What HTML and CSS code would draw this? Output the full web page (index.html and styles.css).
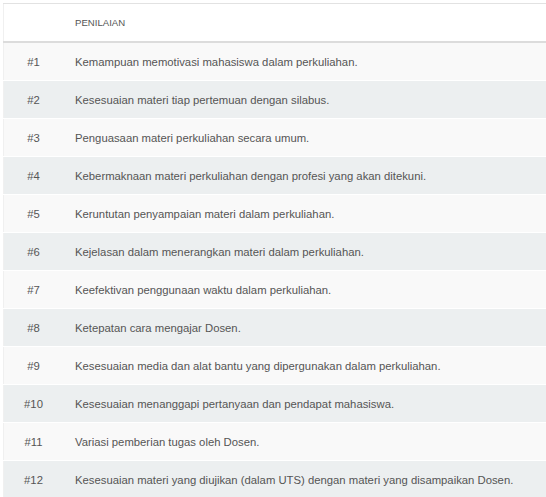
FILE: index.html
```html
<!DOCTYPE html>
<html>
<head>
<meta charset="utf-8">
<link rel="stylesheet" href="styles.css">
</head>
<body>
<table class="grid">
  <thead>
    <tr><th class="num"></th><th class="desc">PENILAIAN</th></tr>
  </thead>
  <tbody>
    <tr><td class="num">#1</td><td class="desc">Kemampuan memotivasi mahasiswa dalam perkuliahan.</td></tr>
    <tr><td class="num">#2</td><td class="desc">Kesesuaian materi tiap pertemuan dengan silabus.</td></tr>
    <tr><td class="num">#3</td><td class="desc">Penguasaan materi perkuliahan secara umum.</td></tr>
    <tr><td class="num">#4</td><td class="desc">Kebermaknaan materi perkuliahan dengan profesi yang akan ditekuni.</td></tr>
    <tr><td class="num">#5</td><td class="desc">Keruntutan penyampaian materi dalam perkuliahan.</td></tr>
    <tr><td class="num">#6</td><td class="desc">Kejelasan dalam menerangkan materi dalam perkuliahan.</td></tr>
    <tr><td class="num">#7</td><td class="desc">Keefektivan penggunaan waktu dalam perkuliahan.</td></tr>
    <tr><td class="num">#8</td><td class="desc">Ketepatan cara mengajar Dosen.</td></tr>
    <tr><td class="num">#9</td><td class="desc">Kesesuaian media dan alat bantu yang dipergunakan dalam perkuliahan.</td></tr>
    <tr><td class="num">#10</td><td class="desc">Kesesuaian menanggapi pertanyaan dan pendapat mahasiswa.</td></tr>
    <tr><td class="num">#11</td><td class="desc">Variasi pemberian tugas oleh Dosen.</td></tr>
    <tr><td class="num">#12</td><td class="desc">Kesesuaian materi yang diujikan (dalam UTS) dengan materi yang disampaikan Dosen.</td></tr>
  </tbody>
</table>
</body>
</html>
```

FILE: styles.css
```css
html, body {
  margin: 0;
  padding: 0;
  background: #fff;
}
body {
  padding: 3px 0 0 3px;
  font-family: "Liberation Sans", Arial, sans-serif;
  color: #555;
  overflow: hidden;
}
.grid {
  border-collapse: collapse;
  width: 543px;
  border-top: 1px solid #e2e2e2;
  border-left: 1px solid #f0f0f0;
}
.grid th {
  height: 37px;
  padding: 0;
  font-weight: normal;
  font-size: 9.6px;
  color: #555;
  text-align: left;
  border-bottom: 2px solid #dcdcdc;
  background: #fff;
}
.grid td {
  height: 37px;
  padding: 0;
  font-size: 11.3px;
  border-top: 1px solid #fff;
}
.grid .num {
  width: 59px;
  text-align: center;
}
.grid .desc {
  padding-left: 12px;
}
.grid tbody tr:nth-child(odd) td {
  background: #f9f9f9;
}
.grid tbody tr:nth-child(even) td {
  background: #eceff0;
}
.grid tbody tr:first-child td {
  border-top: none;
}
```
